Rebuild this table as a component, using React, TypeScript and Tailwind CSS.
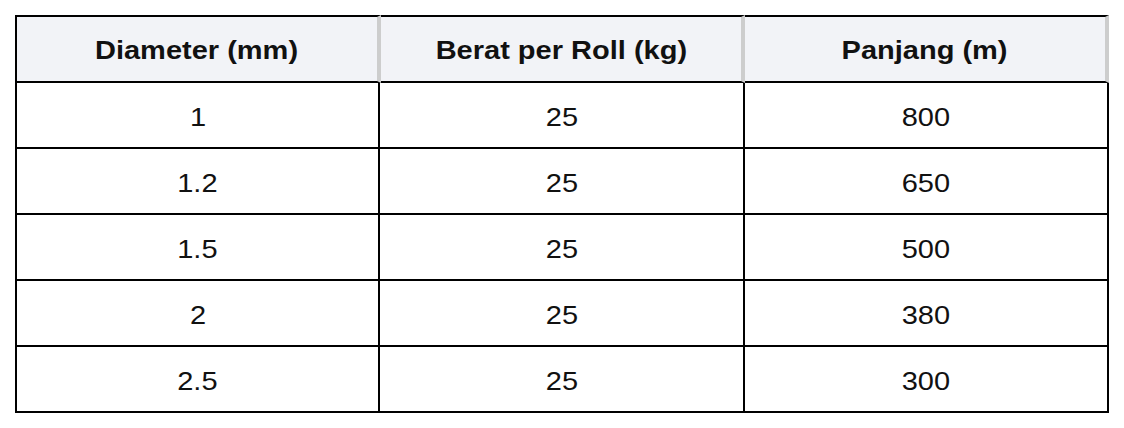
const rows = [
  { diameter: "1", berat: "25", panjang: "800" },
  { diameter: "1.2", berat: "25", panjang: "650" },
  { diameter: "1.5", berat: "25", panjang: "500" },
  { diameter: "2", berat: "25", panjang: "380" },
  { diameter: "2.5", berat: "25", panjang: "300" },
];

const headers = ["Diameter (mm)", "Berat per Roll (kg)", "Panjang (m)"];

// the source table is drawn a little wide, so the text is stretched to match
function Wide({ children }: { children: React.ReactNode }) {
  return <span className="inline-block scale-x-[1.16] whitespace-nowrap">{children}</span>;
}

export default function App() {
  return (
    <div className="min-h-[428px] w-[1124px] bg-white pl-[15px] pt-[15px] font-['Liberation_Sans',Arial,sans-serif] text-[25px] text-[#111111]">
      <div className="w-[1094px]">
        {/* header */}
        <div className="grid grid-cols-[366px_364px_364px] bg-[#f2f3f7]">
          {headers.map((h, i) => (
            <div
              key={h}
              className={
                "flex h-[68px] items-center justify-center border-t-2 border-b-2 border-t-black border-b-black border-r-4 border-r-[#cdcdcd] pt-[3px] font-bold " +
                (i === 0 ? "border-l-2 border-l-black" : "")
              }
            >
              <Wide>{h}</Wide>
            </div>
          ))}
        </div>

        {/* body */}
        <div className="grid grid-cols-[365px_365px_364px]">
          {rows.map((r) => [
            <div
              key={r.diameter + "-d"}
              className="flex h-[66px] items-center justify-center border-b-2 border-l-2 border-r-2 border-black pt-[6px]"
            >
              <Wide>{r.diameter}</Wide>
            </div>,
            <div
              key={r.diameter + "-b"}
              className="flex h-[66px] items-center justify-center border-b-2 border-r-2 border-black pt-[6px]"
            >
              <Wide>{r.berat}</Wide>
            </div>,
            <div
              key={r.diameter + "-p"}
              className="flex h-[66px] items-center justify-center border-b-2 border-r-2 border-black pt-[6px]"
            >
              <Wide>{r.panjang}</Wide>
            </div>,
          ])}
        </div>
      </div>
    </div>
  );
}
